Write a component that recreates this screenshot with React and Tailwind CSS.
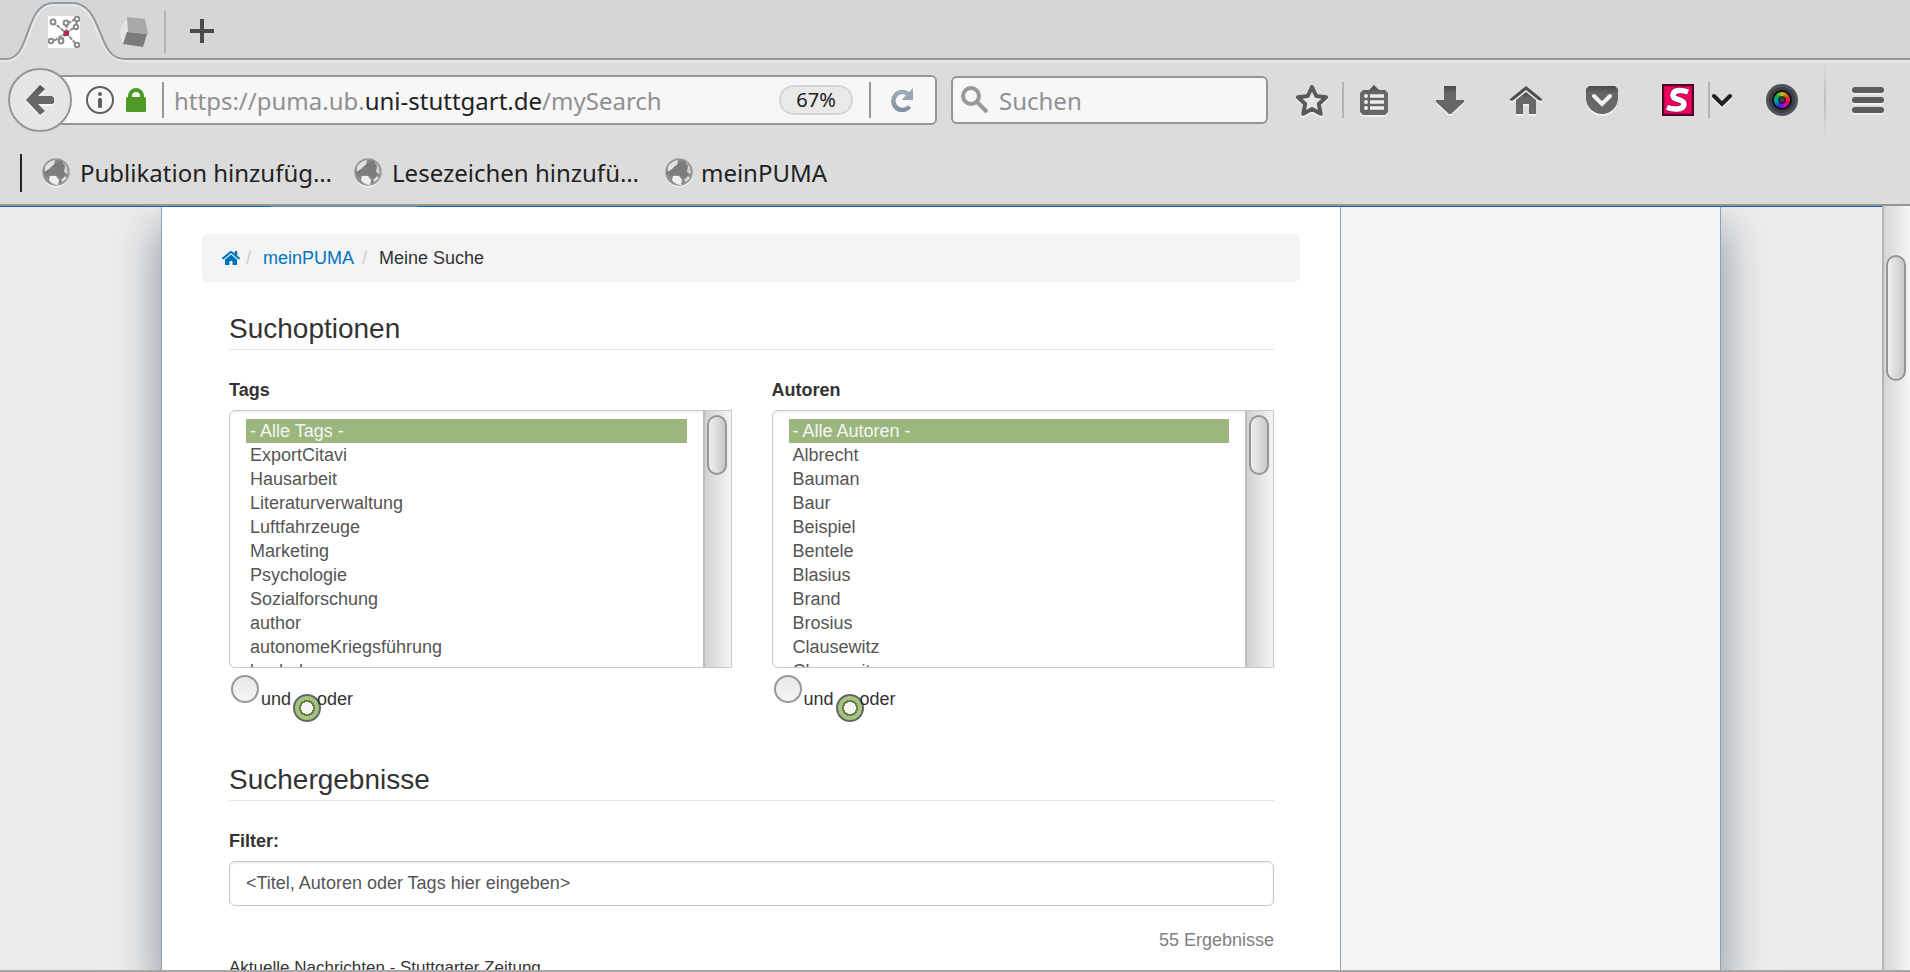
import React from "react";
import { FaHome } from "react-icons/fa";

const tags = [
  "- Alle Tags -", "ExportCitavi", "Hausarbeit", "Literaturverwaltung", "Luftfahrzeuge", "Marketing",
  "Psychologie", "Sozialforschung", "author", "autonomeKriegsführung", "bachelor",
];
const authors = [
  "- Alle Autoren -", "Albrecht", "Bauman", "Baur", "Beispiel", "Bentele",
  "Blasius", "Brand", "Brosius", "Clausewitz", "Clausewitz",
];

function Defs() {
  return (
    <svg className="absolute size-0" aria-hidden="true">
      <defs>
        <linearGradient id="ink" x1="0" y1="0" x2="0" y2="1">
          <stop offset="0" stopColor="#484848" />
          <stop offset="0.25" stopColor="#666" />
          <stop offset="1" stopColor="#686868" />
        </linearGradient>
        <linearGradient id="steel" x1="0" y1="0" x2="0" y2="1">
          <stop offset="0" stopColor="#9faab5" />
          <stop offset="1" stopColor="#84909f" />
        </linearGradient>
      </defs>
    </svg>
  );
}

function PumaFavicon() {
  return (
    <svg width="32" height="32" viewBox="0 0 32 32" fill="none" stroke="#8a8a8a" strokeWidth="2" className="bg-white">
      <path d="M5 6l13 11M18 17l11 12M18 17L4 26M18 17l1-9 10-6M18 17l9-6M18 17l-5 8" strokeDasharray="4 1" />
      <path d="M29 3l-1 8" />
      <g fill="#fff">
        <circle cx="5" cy="6" r="2.4" /><circle cx="18" cy="7" r="2.4" /><circle cx="29" cy="3" r="2.3" />
        <circle cx="28" cy="11" r="2.2" /><circle cx="3" cy="25" r="2.3" /><circle cx="13" cy="25" r="2.4" /><circle cx="29" cy="29" r="2.3" />
      </g>
      <rect x="16" y="15" width="4.500" height="4.500" fill="#c8185c" stroke="#8a4a62" strokeWidth="1" />
    </svg>
  );
}

function CubeFavicon() {
  return (
    <svg width="32" height="32" viewBox="0 0 32 32">
      <path d="M9 2L1 15l4 13 7-12z" fill="#e4e4e4" />
      <path d="M9 1l18 2 3 15-20-2z" fill="#a9a9a9" />
      <path d="M9 16l20 2-4 13-20-3z" fill="#7b7b7b" />
    </svg>
  );
}

function Globe() {
  return (
    <svg width="28" height="30" viewBox="0 0 28 30">
      <circle cx="14" cy="16" r="13.400" fill="#efefef" />
      <circle cx="14" cy="14" r="13" fill="#8a8a8a" stroke="#9a9a9a" strokeWidth="1.600" />
      <path d="M3 9c2-4 6-6.500 10-7l-1 5-4 4-5 3z" fill="#e2e2e2" />
      <path d="M8 18l6 0 3 4-1 5c-4 0-8-3-9-5z" fill="#f0f0f0" />
      <path d="M21 4l4 5 1 7-3-1-3-4z" fill="#d0d0d0" />
      <path d="M23 18l2 2-4 4-2-2z" fill="#dadada" />
      <path d="M10 8l9-6 4 6-1 5 1 4-3 4-4-3-5-2-7 2-3-3 6-4z" fill="#7c7c7c" />
    </svg>
  );
}

function ToolButton({ label, className = "w-15", children }) {
  return (
    <button aria-label={label} className={"flex h-12 shrink-0 items-center justify-center drop-shadow-[0_2px_0_#f0f0f0] " + className}>
      {children}
    </button>
  );
}

function Divider({ className = "bg-[#b4b4b4]" }) {
  return <div className={"h-9 w-0.5 shrink-0 " + className} />;
}

function TabStrip() {
  return (
    <div className="h-[62px] bg-[#d6d6d6]">
      <div className="relative flex h-[62px] items-start border-b-2 border-[#ebebeb]">
        <div className="absolute inset-x-0 bottom-0 h-0.5 bg-[#969696]" />
        <svg className="absolute left-0 top-0" width="128" height="62" viewBox="0 0 128 62">
          <path d="M0 59h6c26 0 17-56 48-56h18c32 0 24 56 52 56h4v3H0z" fill="#dcdcdc" />
          <path d="M0 59h6C32 59 23 3 54 3h18c32 0 24 56 52 56h4" fill="none" stroke="#929aa2" strokeWidth="2" />
          <path d="M0 61h6C34 60 26 5 54 5h18c29 0 22 55 52 56h4" fill="none" stroke="#ebebeb" strokeWidth="1.5" />
        </svg>
        <div className="relative ml-12 mt-4"><PumaFavicon /></div>
        <div className="ml-[38px] mt-4"><CubeFavicon /></div>
        <div className="ml-3.5 mt-[11px] h-[42px] w-0.5 bg-[#b4b4b4]" />
        <button aria-label="Neuer Tab" className="ml-6 mt-[19px]">
          <svg width="24" height="24" viewBox="0 0 24 24"><path d="M12 0v24M0 12h24" stroke="#4b4b4b" strokeWidth="4" /></svg>
        </button>
      </div>
    </div>
  );
}

function NavBar() {
  return (
    <div className="flex h-[76px] items-center pl-2 pr-3">
      <button aria-label="Zurück" className="relative z-10 flex size-16 shrink-0 items-center justify-center rounded-full border-2 border-[#969696] bg-[#e6e6e6]">
        <svg width="28" height="32" viewBox="0 0 28 32" className="drop-shadow-[0_2px_0_#f6f6f6]">
          <path d="M14 1l5 4-7 7h14l2 2v5l-2 1H12l7 7-5 4L0 16z" fill="url(#ink)" />
        </svg>
      </button>
      <div className="-ml-3 flex h-[50px] min-w-0 flex-1 items-center rounded-r-md border-2 border-[#969696] bg-[#f7f7f7] pl-6">
        <svg width="28" height="28" viewBox="0 0 28 28" className="shrink-0">
          <circle cx="14" cy="14" r="13" fill="none" stroke="#606060" strokeWidth="2" />
          <circle cx="14" cy="8" r="2" fill="#606060" />
          <rect x="12" y="12" width="4" height="10" rx="1.5" fill="#606060" />
        </svg>
        <svg width="20" height="24" viewBox="0 0 20 24" className="ml-3 shrink-0">
          <path d="M4 11V8a6 6 0 0 1 12 0v3" fill="none" stroke="#4f9a26" strokeWidth="4" />
          <rect x="0" y="9" width="20" height="15" rx="1.5" fill="#4f9a26" />
        </svg>
        <Divider className="ml-4 bg-[#969696]" />
        <a href="https://puma.ub.uni-stuttgart.de/mySearch" className="ml-2.5 min-w-0 flex-1 truncate pt-0.5 text-2xl text-[#8f9092]">
          https://puma.ub.<span className="text-[#222]">uni-stuttgart.de</span>/mySearch
        </a>
        <button className="h-[30px] w-[74px] shrink-0 rounded-full border-2 border-[#d5d5d5] bg-[#e9e9e9] text-xl leading-6 text-[#222]">67%</button>
        <Divider className="ml-4 bg-[#969696]" />
        <button aria-label="Neu laden" className="ml-5 mr-[22px] shrink-0">
          <svg width="22" height="24" viewBox="0 0 22 24">
            <path d="M17 6a9 9 0 1 0 1.500 12.500" fill="none" stroke="url(#steel)" strokeWidth="4.500" />
            <path d="M22 0v12H11l3-4z" fill="#9ba6b2" />
          </svg>
        </button>
      </div>
      <label className="ml-3.5 flex h-12 w-[317px] shrink-0 items-center rounded-md border-2 border-[#969696] bg-[#f7f7f7] pl-2">
        <svg width="28" height="28" viewBox="0 0 28 28" fill="none" stroke="#999" strokeWidth="4">
          <circle cx="10" cy="10" r="8" /><path d="M15 15l11 11" />
        </svg>
        <input aria-label="Suchen" placeholder="Suchen" className="ml-2.5 min-w-0 flex-1 bg-transparent pt-0.5 text-2xl outline-none placeholder:text-[#8f9092]" />
      </label>
      <ToolButton label="Lesezeichen setzen" className="ml-3.5 w-15">
        <svg width="34" height="32" viewBox="0 0 34 32">
          <path d="M17 3l4.200 9 9.800 1.200-7.200 6.800 1.900 9.800-8.700-4.800-8.700 4.800 1.900-9.800L3 13.200 12.800 12z" fill="#e6e6e6" stroke="#5a5a5a" strokeWidth="4" strokeLinejoin="round" />
        </svg>
      </ToolButton>
      <Divider />
      <ToolButton label="Lesezeichen anzeigen">
        <svg width="28" height="30" viewBox="0 0 28 30">
          <path d="M14 0l5 5h6l3 3v19l-3 3H3l-3-3V8l3-3h6z" fill="url(#ink)" />
          <path d="M10 11h14M10 17h14M10 23h14" stroke="#eee" strokeWidth="3.400" />
          <g fill="#eee"><circle cx="6" cy="11" r="2" /><circle cx="6" cy="17" r="2" /><circle cx="6" cy="23" r="2" /></g>
        </svg>
      </ToolButton>
      <ToolButton label="Downloads" className="ml-4 w-15">
        <svg width="28" height="28" viewBox="0 0 28 28"><path d="M8 0h12v14h8v2L15 28h-2L0 16v-2h8z" fill="url(#ink)" /></svg>
      </ToolButton>
      <ToolButton label="Startseite" className="ml-4 w-15">
        <svg width="32" height="28" viewBox="0 0 32 28">
          <path d="M16 0l16 13v1.500h-3L16 4 3 14.500H0V13z" fill="#4f4f4f" />
          <path d="M16 6l10 8v14h-7V18h-6v10H6V14z" fill="url(#ink)" />
        </svg>
      </ToolButton>
      <ToolButton label="Pocket" className="ml-4 w-15">
        <svg width="32" height="28" viewBox="0 0 32 28">
          <path d="M3 0h26l3 3v9a16 16 0 0 1-32 0V3z" fill="url(#ink)" />
          <path d="M8 10l8 8 8-8" fill="none" stroke="#f2f2f2" strokeWidth="4" strokeLinecap="round" />
        </svg>
      </ToolButton>
      <button aria-label="Stylish" className="ml-4 flex h-12 w-15 shrink-0 items-center justify-center">
        <svg width="32" height="32" viewBox="0 0 32 32">
          <rect x="1" y="1" width="30" height="30" fill="#f0005f" stroke="#4d0624" strokeWidth="2.500" />
          <path d="M26 8c-5-2-14-3-15 2.500-1 6.500 12 4 11 10-1 6-11 5-17 3" fill="none" stroke="#55203a" strokeOpacity="0.500" strokeWidth="7.500" />
          <path d="M26 8c-5-2-14-3-15 2.500-1 6.500 12 4 11 10-1 6-11 5-17 3" fill="none" stroke="#fff" strokeWidth="5.500" />
        </svg>
      </button>
      <Divider />
      <ToolButton label="Stylish-Menü" className="w-6">
        <svg width="20" height="14" viewBox="0 0 20 14" fill="none" stroke="#222" strokeWidth="4" strokeLinecap="round"><path d="M2 3l8 8 8-8" /></svg>
      </ToolButton>
      <button aria-label="Bildschirmfoto" className="ml-[18px] flex h-12 w-15 shrink-0 items-center justify-center">
        <span className="flex size-8 items-center justify-center rounded-full border-[3px] border-[#50555c] bg-[#3b3e45]">
          <span className="flex size-5 items-center justify-center rounded-full border-2 border-[#111] bg-[conic-gradient(#c0c020,#e05020,#e01060,#c000c0,#3030e0,#00a0c0,#10b040,#c0c020)]">
            <span className="flex size-2 items-center justify-center rounded-full bg-[#1c1c1c]/80"><span className="size-1 rounded-full bg-[#444]" /></span>
          </span>
        </span>
      </button>
      <div className="ml-3 h-[72px] w-0.5 shrink-0 bg-linear-to-b from-transparent via-[#bebebe] to-transparent" />
      <ToolButton label="Menü" className="ml-3 w-15">
        <svg width="32" height="26" viewBox="0 0 32 26" fill="#5c5c5c"><rect width="32" height="6" rx="3" /><rect y="10" width="32" height="6" rx="3" /><rect y="20" width="32" height="6" rx="3" /></svg>
      </ToolButton>
    </div>
  );
}

function Bookmark({ href, className, children }) {
  return (
    <a href={href} className={"flex items-center " + className}>
      <Globe />
      <span>{children}</span>
    </a>
  );
}

function BookmarksBar() {
  return (
    <nav className="flex h-[66px] items-center pl-5 pt-1 text-2xl text-[#222]">
      <div className="h-[38px] w-0.5 bg-[#222]" />
      <Bookmark href="#publikation" className="ml-5 gap-2.5">Publikation hinzufüg…</Bookmark>
      <Bookmark href="#lesezeichen" className="ml-[22px] gap-2.5">Lesezeichen hinzufü…</Bookmark>
      <Bookmark href="#meinpuma" className="ml-[26px] gap-2">meinPUMA</Bookmark>
    </nav>
  );
}

function ScrollThumb({ className }) {
  return <div className={"w-5 rounded-full border-2 border-[#969696] bg-linear-to-r from-[#efefef] to-[#c9c9c9] " + className} />;
}

function ListField({ id, label, items }) {
  return (
    <div className="min-w-0 flex-1">
      <label htmlFor={id} className="mb-2 block font-bold">{label}</label>
      <div className="flex h-[258px] overflow-hidden rounded-l-md border border-[#c8c8c8] bg-white shadow-[inset_0_1px_2px_rgba(0,0,0,0.08)]">
        <select
          id={id}
          multiple
          defaultValue={["0"]}
          className="h-64 min-w-0 flex-1 appearance-none overflow-hidden bg-transparent px-4 pt-2 text-lg leading-6 text-[#555] outline-none [scrollbar-width:none]"
        >
          {items.map((name, i) => (
            <option key={i} value={String(i)} className="h-6 min-h-6 px-1 pb-0 pt-0.5 checked:bg-[linear-gradient(#9bb77d,#9bb77d)] checked:text-[#f5f5f5]">
              {name}
            </option>
          ))}
        </select>
        <div className="w-7 border-l-2 border-[#bdbdbd] bg-linear-to-r from-[#d2d2d2] to-[#f4f4f4] pl-0.5 pt-1">
          <ScrollThumb className="h-15" />
        </div>
      </div>
      <div className="flex items-start pl-0.5 pt-[7px] leading-6">
        <input
          type="radio" id={id + "-und"} name={id + "-op"}
          className="size-7 appearance-none rounded-full border-2 border-[#999] bg-linear-to-b from-[#e9e9e9] to-[#f5f5f5]"
        />
        <label htmlFor={id + "-und"} className="ml-0.5 mt-3">und</label>
        <input
          type="radio" id={id + "-oder"} name={id + "-op"} defaultChecked
          className="ml-0.5 mt-[19px] size-7 appearance-none rounded-full border-2 border-[#666] bg-[radial-gradient(circle,#f4f4f4_0_6px,#6c8550_6px_8px,#a3c580_8px)]"
        />
        <label htmlFor={id + "-oder"} className="-ml-1 mt-3">oder</label>
      </div>
    </div>
  );
}

function Heading({ className, children }) {
  return <h2 className={"border-b border-[#e5e5e5] pb-1 text-[28px] leading-8 " + className}>{children}</h2>;
}

export default function App() {
  return (
    <div className="flex h-screen flex-col overflow-hidden bg-[#ececec] font-['Noto_Sans',sans-serif]">
      <Defs />
      <header className="shrink-0 border-b-2 border-[#969696] bg-[#dcdcdc]">
        <TabStrip />
        <NavBar />
        <BookmarksBar />
      </header>
      <div className="flex min-h-0 flex-1 border-b-2 border-[#a9a7a8] font-['Liberation_Sans',sans-serif] text-lg leading-6 text-[#333]">
        <div className="flex min-w-0 flex-1 flex-col overflow-hidden">
          <div className="relative z-10 h-px shrink-0 bg-[#0069ab] pl-[271px]"><div className="h-px w-[146px] bg-[#5b93bd]" /></div>
          <div className="mx-auto flex min-h-0 w-full max-w-[1560px] flex-1 border-x border-[#8fa0b3] bg-[#f4f4f4] shadow-[0_24px_40px_4px_rgba(105,122,142,0.7)]">
            <main className="min-w-0 flex-1 border-r border-[#8fa0b3] bg-white px-10 pt-[27px]">
              <nav className="flex h-12 items-center rounded-md bg-[#f4f4f4] px-5">
                <a href="#home" aria-label="Startseite" className="text-[#0073bd]"><FaHome size={18} /></a>
                <span className="ml-1.5 text-[#ccc]">/</span>
                <a href="#meinpuma" className="ml-3 text-[#0073bd]">meinPUMA</a>
                <span className="ml-2 text-[#ccc]">/</span>
                <span className="ml-3">Meine Suche</span>
              </nav>
              <div className="pl-[27px] pr-[26px]">
                <Heading className="mt-[31px]">Suchoptionen</Heading>
                <div className="mt-7 flex gap-10">
                  <ListField id="tags" label="Tags" items={tags} />
                  <ListField id="autoren" label="Autoren" items={authors} />
                </div>
                <Heading className="mt-[42px]">Suchergebnisse</Heading>
                <label htmlFor="filter" className="mb-2 mt-7 block font-bold">Filter:</label>
                <input
                  id="filter"
                  placeholder="<Titel, Autoren oder Tags hier eingeben>"
                  className="block h-[45px] w-full rounded-md border border-[#c8c8c8] px-4 text-lg shadow-[inset_0_1px_2px_rgba(0,0,0,0.08)] outline-none placeholder:text-[#555]"
                />
                <p className="mt-[22px] text-right text-[#808080]">55 Ergebnisse</p>
                <p className="mt-1 text-[17px] leading-6">Aktuelle Nachrichten - Stuttgarter Zeitung</p>
              </div>
            </main>
            <aside className="w-[379px] shrink-0" />
          </div>
        </div>
        <div className="w-7 shrink-0 border-l-2 border-[#b4b4b4] bg-linear-to-r from-[#d6d6d6] to-[#f6f6f6] pl-0.5 pt-[49px]">
          <ScrollThumb className="h-[126px]" />
        </div>
      </div>
    </div>
  );
}
